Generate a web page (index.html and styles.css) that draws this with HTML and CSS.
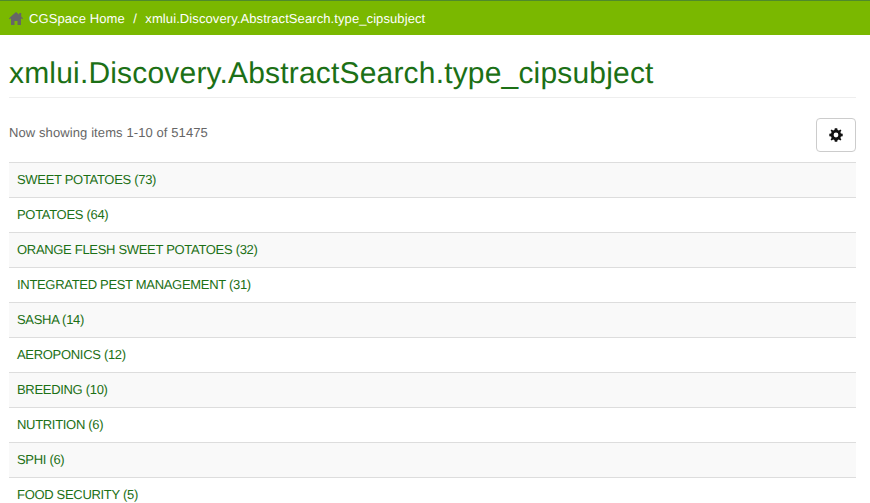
FILE: index.html
```html
<!DOCTYPE html>
<html lang="en">
<head>
<meta charset="utf-8">
<title>xmlui.Discovery.AbstractSearch.type_cipsubject</title>
<link rel="stylesheet" href="styles.css">
</head>
<body>
<nav class="trail">
  <svg class="home" viewBox="0 0 14 13" aria-hidden="true"><path d="M7 0 L10.2 2.8 V1 H12.2 V4.6 L14 6.3 L13.3 7.2 L12 6.2 V13 H8.5 V9 H5.5 V13 H2 V6.2 L0.7 7.2 L0 6.3 Z"/></svg>
  <a class="crumb" href="#">CGSpace Home</a>
  <span class="sep">/</span>
  <span class="crumb">xmlui.Discovery.AbstractSearch.type_cipsubject</span>
</nav>
<main class="content">
  <h2 class="title">xmlui.Discovery.AbstractSearch.type_cipsubject</h2>
  <div class="pager">
    <p class="count">Now showing items 1-10 of 51475</p>
    <button class="gear" type="button" aria-label="Settings">
      <svg viewBox="0 0 14 14" aria-hidden="true"><path fill-rule="evenodd" d="M5.8 0.3 H8.2 L8.6 2.1 L9.9 2.6 L11.4 1.6 L12.4 2.6 L11.4 4.1 L11.9 5.4 L13.7 5.8 V8.2 L11.9 8.6 L11.4 9.9 L12.4 11.4 L11.4 12.4 L9.9 11.4 L8.6 11.9 L8.2 13.7 H5.8 L5.4 11.9 L4.1 11.4 L2.6 12.4 L1.6 11.4 L2.6 9.9 L2.1 8.6 L0.3 8.2 V5.8 L2.1 5.4 L2.6 4.1 L1.6 2.6 L2.6 1.6 L4.1 2.6 L5.4 2.1 Z M7 4.6 A2.4 2.4 0 1 0 7 9.4 A2.4 2.4 0 1 0 7 4.6 Z"/></svg>
    </button>
  </div>
  <ul class="list">
    <li class="row"><a href="#">SWEET POTATOES</a> (73)</li>
    <li class="row"><a href="#">POTATOES</a> (64)</li>
    <li class="row"><a href="#">ORANGE FLESH SWEET POTATOES</a> (32)</li>
    <li class="row"><a href="#">INTEGRATED PEST MANAGEMENT</a> (31)</li>
    <li class="row"><a href="#">SASHA</a> (14)</li>
    <li class="row"><a href="#">AEROPONICS</a> (12)</li>
    <li class="row"><a href="#">BREEDING</a> (10)</li>
    <li class="row"><a href="#">NUTRITION</a> (6)</li>
    <li class="row"><a href="#">SPHI</a> (6)</li>
    <li class="row"><a href="#">FOOD SECURITY</a> (5)</li>
  </ul>
</main>
</body>
</html>
```
FILE: styles.css
```css
* { box-sizing: border-box; }
html, body { margin: 0; padding: 0; height: 503px; overflow: hidden; }
body {
  background: #fff;
  color: #555;
  font-family: "Liberation Sans", Arial, sans-serif;
  font-size: 13px;
  line-height: 20px;
  text-rendering: geometricPrecision;
}
.trail {
  display: flex;
  align-items: center;
  height: 35px;
  padding: 1px 9px 0;
  background: #7ab800;
  border-top: 1px solid #4f8a2c;
  color: #fff;
}
.home { width: 14px; height: 13px; margin-right: 6px; fill: #666; flex: none; }
.crumb { color: #fff; text-decoration: none; letter-spacing: 0.09px; }
.sep { margin: 0 8.5px; }
.content { padding: 0 14px 0 9px; }
.title {
  margin: 21px 0 0;
  padding-bottom: 6px;
  border-bottom: 1px solid #eee;
  color: #1c7016;
  font-size: 30px;
  font-weight: 400;
  line-height: 35px;
  letter-spacing: 0.18px;
}
.pager {
  display: flex;
  justify-content: space-between;
  align-items: flex-start;
  margin-top: 20px;
  height: 44px;
}
.count { margin: 5px 0 0; color: #666; letter-spacing: 0.1px; }
.gear {
  display: flex;
  align-items: center;
  justify-content: center;
  width: 40px;
  height: 34px;
  padding: 0;
  background: #fff;
  border: 1px solid #ccc;
  border-radius: 4px;
}
.gear svg { width: 14px; height: 14px; fill: #111; }
.list { margin: 0; padding: 0; list-style: none; }
.row {
  height: 35px;
  padding: 7px 8px;
  border-top: 1px solid #ddd;
  color: #1c7016;
  letter-spacing: -0.31px;
}
.row:nth-child(odd) { background: #f9f9f9; }
.row a { color: #1c7016; text-decoration: none; }
```
